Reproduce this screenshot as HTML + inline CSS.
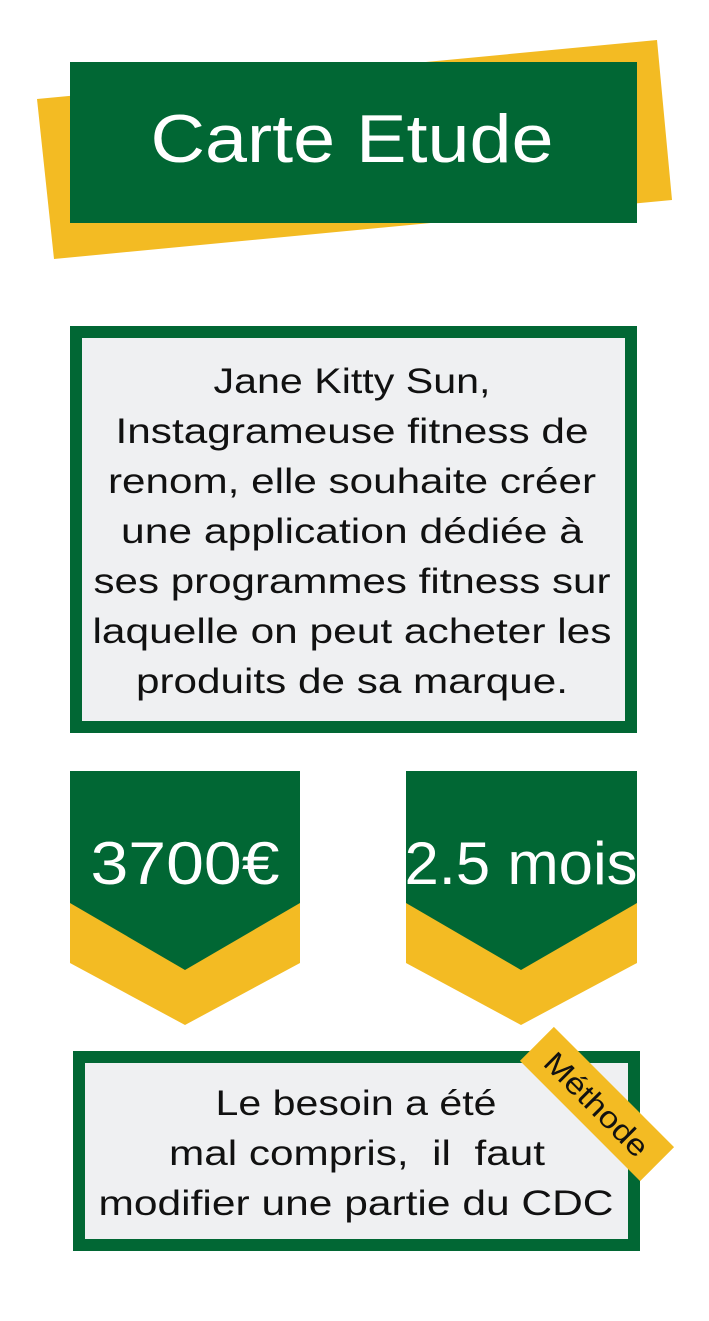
<!DOCTYPE html>
<html><head><meta charset="utf-8"><style>
html,body{margin:0;padding:0;background:#fff;}
svg{display:block;}
text{font-family:"Liberation Sans",sans-serif;}
</style></head><body>
<svg width="709" height="1321" viewBox="0 0 709 1321" xmlns="http://www.w3.org/2000/svg">
<rect width="709" height="1321" fill="#fff"/>
<polygon points="37,99 657,40 672,200 54,259" fill="#f3bb23"/>
<rect x="70" y="62" width="567" height="161" fill="#016734"/>
<text x="352" y="162" text-anchor="middle" font-size="68" fill="#fff" textLength="403" lengthAdjust="spacingAndGlyphs">Carte Etude</text>

<rect x="70" y="326" width="567" height="407" fill="#016734"/>
<rect x="82" y="338" width="543" height="383" fill="#eff0f2"/>
<g font-size="35" fill="#111" text-anchor="middle">
<text x="352" y="393" textLength="277" lengthAdjust="spacingAndGlyphs">Jane Kitty Sun,</text>
<text x="352" y="443" textLength="473" lengthAdjust="spacingAndGlyphs">Instagrameuse fitness de</text>
<text x="352" y="493" textLength="488" lengthAdjust="spacingAndGlyphs">renom, elle souhaite créer</text>
<text x="352" y="543" textLength="462" lengthAdjust="spacingAndGlyphs">une application dédiée à</text>
<text x="352" y="593" textLength="517" lengthAdjust="spacingAndGlyphs">ses programmes fitness sur</text>
<text x="352" y="643" textLength="519" lengthAdjust="spacingAndGlyphs">laquelle on peut acheter les</text>
<text x="352" y="693" textLength="432" lengthAdjust="spacingAndGlyphs">produits de sa marque.</text>
</g>

<polygon points="70,771 300,771 300,963 185,1025 70,963" fill="#f3bb23"/>
<polygon points="70,771 300,771 300,903 185,970 70,903" fill="#016734"/>
<text x="185" y="884" text-anchor="middle" font-size="60" fill="#fff" textLength="189" lengthAdjust="spacingAndGlyphs">3700€</text>

<polygon points="406,771 637,771 637,963 521,1025 406,963" fill="#f3bb23"/>
<polygon points="406,771 637,771 637,903 521,970 406,903" fill="#016734"/>
<text x="521" y="884" text-anchor="middle" font-size="60" fill="#fff" textLength="233" lengthAdjust="spacingAndGlyphs">2.5 mois</text>

<rect x="73" y="1051" width="567" height="200" fill="#016734"/>
<rect x="85" y="1063" width="543" height="176" fill="#eff0f2"/>
<g font-size="35" fill="#111" text-anchor="middle">
<text x="356" y="1115" textLength="281" lengthAdjust="spacingAndGlyphs">Le besoin a été</text>
<text x="357" y="1165" textLength="376" lengthAdjust="spacingAndGlyphs" xml:space="preserve">mal compris,  il  faut</text>
<text x="356" y="1215" textLength="515" lengthAdjust="spacingAndGlyphs">modifier une partie du CDC</text>
</g>

<g transform="translate(597,1104) rotate(45)">
<rect x="-85" y="-24" width="170" height="48" fill="#f3bb23"/>
<text x="0" y="11" text-anchor="middle" font-size="30" fill="#111" textLength="134" lengthAdjust="spacingAndGlyphs">Méthode</text>
</g>
</svg>
</body></html>
